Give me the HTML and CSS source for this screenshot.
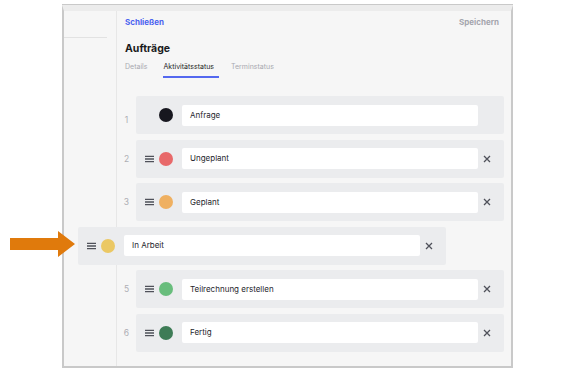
FILE: index.html
```html
<!DOCTYPE html>
<html lang="de">
<head>
<meta charset="utf-8">
<title>Aufträge</title>
<link rel="stylesheet" href="styles.css">
</head>
<body>
<div class="stage">
  <div class="frame">
    <aside class="sidebar"><div class="side-line"></div></aside>
    <main class="main">
      <header class="topbar">
        <a class="close-link">Schließen</a>
        <span class="save">Speichern</span>
      </header>
      <h1 class="title">Aufträge</h1>
      <nav class="tabs">
        <span class="tab">Details</span>
        <span class="tab active">Aktivitätsstatus</span>
        <span class="tab">Terminstatus</span>
      </nav>
      <ol class="list">
        <li class="item first">
          <span class="num">1</span>
          <div class="box">
            <span class="handle-slot"></span>
            <span class="dot" style="background:#17171f"></span>
            <div class="input">Anfrage</div>
            <span class="x-slot"></span>
          </div>
        </li>
        <li class="item">
          <span class="num">2</span>
          <div class="box">
            <svg class="handle" viewBox="0 0 10 8"><path d="M0 1H10M0 4H10M0 7H10"/></svg>
            <span class="dot" style="background:#e8696a"></span>
            <div class="input">Ungeplant</div>
            <svg class="x" viewBox="0 0 8 8"><path d="M1 1L7 7M7 1L1 7"/></svg>
          </div>
        </li>
        <li class="item">
          <span class="num">3</span>
          <div class="box">
            <svg class="handle" viewBox="0 0 10 8"><path d="M0 1H10M0 4H10M0 7H10"/></svg>
            <span class="dot" style="background:#efb061"></span>
            <div class="input">Geplant</div>
            <svg class="x" viewBox="0 0 8 8"><path d="M1 1L7 7M7 1L1 7"/></svg>
          </div>
        </li>
        <li class="item dragging">
          <span class="num">4</span>
          <div class="box">
            <svg class="handle" viewBox="0 0 10 8"><path d="M0 1H10M0 4H10M0 7H10"/></svg>
            <span class="dot" style="background:#ebc864"></span>
            <div class="input">In Arbeit</div>
            <svg class="x" viewBox="0 0 8 8"><path d="M1 1L7 7M7 1L1 7"/></svg>
          </div>
        </li>
        <li class="item">
          <span class="num">5</span>
          <div class="box">
            <svg class="handle" viewBox="0 0 10 8"><path d="M0 1H10M0 4H10M0 7H10"/></svg>
            <span class="dot" style="background:#68bd7c"></span>
            <div class="input">Teilrechnung erstellen</div>
            <svg class="x" viewBox="0 0 8 8"><path d="M1 1L7 7M7 1L1 7"/></svg>
          </div>
        </li>
        <li class="item">
          <span class="num">6</span>
          <div class="box">
            <svg class="handle" viewBox="0 0 10 8"><path d="M0 1H10M0 4H10M0 7H10"/></svg>
            <span class="dot" style="background:#3e7c56"></span>
            <div class="input">Fertig</div>
            <svg class="x" viewBox="0 0 8 8"><path d="M1 1L7 7M7 1L1 7"/></svg>
          </div>
        </li>
      </ol>
    </main>
  </div>
  <svg class="arrow" viewBox="0 0 66 26"><path d="M0 7H48V0L65 13L48 26V19H0Z"/></svg>
</div>
</body>
</html>
```
FILE: styles.css
```css
* { box-sizing: border-box; }
html, body { margin: 0; padding: 0; background: #fff; }
body { font-family: Inter, "Noto Sans", sans-serif; color: #1d1d24; }

.stage {
  position: relative;
  width: 581px;
  height: 370px;
  padding: 5px 0 0 62px;
  overflow: hidden;
}

.frame {
  width: 451px;
  height: 363px;
  border: 2px solid #c9c9c9;
  border-top: 6px solid #ececec;
  box-shadow: 0 -1px 0 #c9c9c9;
  background: #f6f6f6;
  display: grid;
  grid-template-columns: 53px 1fr;
}

.sidebar {
  border-right: 1px solid #e7e7e7;
  padding-top: 26px;
}
.side-line {
  height: 1px;
  width: 43px;
  background: #e2e2e2;
}

.main {
  display: flex;
  flex-direction: column;
  padding: 0 7px 0 0;
  min-width: 0;
}

.topbar {
  display: flex;
  justify-content: space-between;
  align-items: center;
  height: 22px;
  padding-left: 8px;
  padding-right: 5px;
  font-size: 8px;
  font-weight: 700;
}
.close-link { color: #4b63f0; }
.save { color: #a4a5ad; }

.title {
  margin: 8px 0 0 8px;
  font-size: 10.5px;
  font-weight: 700;
  line-height: 16px;
  color: #1a1a20;
}

.tabs {
  display: flex;
  gap: 16px;
  margin: 5px 0 0 8px;
  font-size: 7px;
  line-height: 10px;
  color: #a8a9b0;
}
.tab { padding-bottom: 4px; border-bottom: 2px solid transparent; }
.tab.active {
  color: #1e1e26;
  border-bottom-color: #5468ef;
  padding-right: 5px;
  margin-right: -4px;
}

.list {
  list-style: none;
  margin: 18px 0 0 0;
  padding: 0;
  display: flex;
  flex-direction: column;
  gap: 5.5px;
}

.item {
  display: flex;
  align-items: center;
  height: 38px;
}
.num {
  width: 19px;
  text-align: center;
  font-size: 8.5px;
  color: #aeaeb4;
}
.item.first .num { position: relative; top: 5px; }

.box {
  flex: 1;
  height: 38px;
  background: #ebecee;
  border-radius: 2px;
  display: flex;
  align-items: center;
  padding-left: 9px;
}
.handle, .handle-slot {
  width: 9px;
  height: 8px;
  flex: none;
}
.handle path { stroke: #4f515a; stroke-width: 1.4; fill: none; }
.dot {
  width: 14px;
  height: 14px;
  border-radius: 50%;
  margin-left: 5px;
  flex: none;
}
.input {
  margin-left: 9px;
  width: 296px;
  height: 21px;
  background: #fff;
  border-radius: 2px;
  padding-left: 8px;
  font-size: 8px;
  line-height: 21px;
  color: #26262d;
}
.x, .x-slot {
  width: 8px;
  height: 8px;
  margin-left: 5px;
  flex: none;
}
.x path { stroke: #4f515a; stroke-width: 1.3; fill: none; }

.item.dragging { transform: translateX(-58px); }
.item.dragging .num { visibility: hidden; }

.arrow {
  position: absolute;
  left: 10px;
  top: 231px;
  width: 66px;
  height: 26px;
}
.arrow path { fill: #e07a0c; }
```
